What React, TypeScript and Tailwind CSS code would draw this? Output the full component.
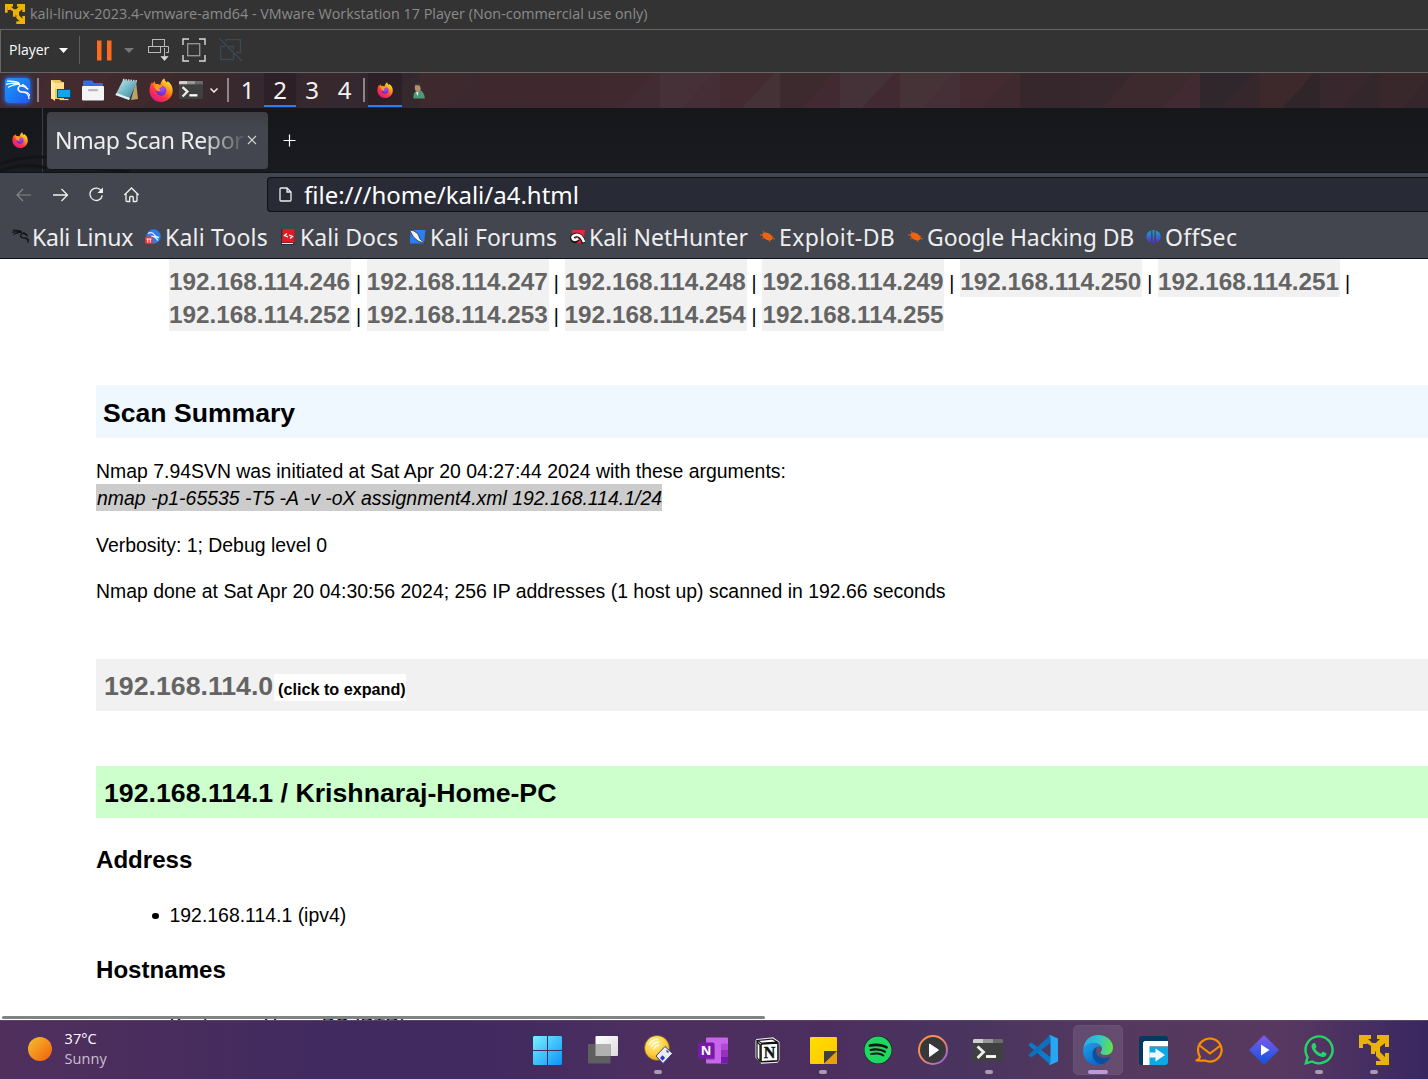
import React from "react";
import { SiKalilinux } from "react-icons/si";
import { FaSpotify, FaWhatsapp } from "react-icons/fa";

const NOTO = "font-['Noto_Sans',sans-serif]";
const SEGOE = "font-['Open_Sans',sans-serif]";

function VmwareIcon({ size, color }: { size: number; color: string }) {
  return (
    <svg width={size} height={size} viewBox="0 0 30 30" fill={color}>
      <path d="M0 0H12V4H8L13 8H17L22 4H18V0H30V12H26V8L21 12V17L26 22V18H30V30H17V26H22L17 21V17L15 15H12V11L8 8L4 5V13H0Z" />
      <path d="M12 15H16V19H12Z M4 5H8V9H4Z" />
      <path d="M7 4.6L11.5 8.8M23 4.6L18.5 8.8M19 19L24 24" stroke={color} strokeWidth="3.4" />
    </svg>
  );
}

function Firefox({ size }: { size: number }) {
  return (
    <svg width={size} height={size} viewBox="0 0 24 24">
      <defs>
        <linearGradient id="ffBody" x1="0.85" y1="0.05" x2="0.2" y2="0.95">
          <stop offset="0" stopColor="#fff44f" />
          <stop offset="0.35" stopColor="#ff980e" />
          <stop offset="0.65" stopColor="#ff3647" />
          <stop offset="1" stopColor="#e31587" />
        </linearGradient>
        <radialGradient id="ffGlobe" cx="0.6" cy="0.25" r="0.8">
          <stop offset="0" stopColor="#b24df5" />
          <stop offset="1" stopColor="#592acb" />
        </radialGradient>
      </defs>
      <path
        d="M15.2 0.2c.3 2 1.6 3.200 2.800 4.400.3-.3.4-1 .3-1.600C21.600 5 23.700 8.500 23.700 12.600 23.700 18.900 18.600 24 12.200 24 5.800 24 .5 18.900.5 12.400.5 9.200 1.500 6.200 3.200 4c0 .8.1 1.300.4 1.800C4.200 4.700 5 3.800 5.800 3.200c0 1.300.4 2.200 1.100 2.800 1.500-.3 3.100 0 4.300.9C12 4 13.300 1.600 15.200.2Z"
        fill="url(#ffBody)"
      />
      <circle cx="12.300" cy="12.800" r="5" fill="url(#ffGlobe)" />
      <path d="M4.500 6.500c2-.9 4.600-.6 6.300.8 1 .1 2.300.1 2.500.8-.2 1.200-2.600 1.400-3 2.300 0 1.200.6 1.900 1.700 1.900-1.400 1.300-3.600 1.200-4.800-.2C6.500 10.500 5 8.700 4.500 6.500Z" fill="#ff9a1a" />
    </svg>
  );
}

function WinFolder() {
  return (
    <svg width="22" height="24" viewBox="0 0 22 24">
      <path d="M1 2h9l2 2h2v17H1Z" fill="#f0c560" />
      <path d="M1 2l4 3v18l-4-3Z" fill="#ffe9a0" />
      <path d="M5 5h9v6H5Z" fill="#ffe08a" />
      <rect x="7.500" y="11.500" width="13" height="8" fill="#12a5ea" stroke="#0a4b78" />
      <path d="M9.500 21.500h9" stroke="#cfd8dc" strokeWidth="1.200" />
    </svg>
  );
}

function FileManager() {
  return (
    <svg width="22" height="21" viewBox="0 0 22 21">
      <path d="M1 2q0-1.500 1.500-1.500H10L12 3h8q1 0 1 1v5H1Z" fill="#2f6fe4" />
      <rect x="0" y="6" width="22" height="14.500" rx="1" fill="#f4f4f6" />
      <rect x="6" y="9" width="10" height="2.200" rx="1" fill="#b7b7b9" />
    </svg>
  );
}

function Notepad() {
  return (
    <svg width="24" height="24" viewBox="0 0 24 24">
      <defs>
        <linearGradient id="note" x1="0" y1="0" x2="1" y2="1">
          <stop offset="0" stopColor="#c9eef2" />
          <stop offset="0.5" stopColor="#6fb6c4" />
          <stop offset="1" stopColor="#357f92" />
        </linearGradient>
      </defs>
      <path d="M21 3L23 21L16 22Z" fill="#b9a468" />
      <path d="M8 2L22 3.500L14 22L0.500 17Z" fill="url(#note)" />
      <path d="M0.500 17L14 22L15 20L1.500 15Z" fill="#e6f1f2" />
      <path d="M8 1.500L22 3" stroke="#d9dcdc" strokeWidth="1.600" strokeDasharray="1.500 1" />
    </svg>
  );
}

function Terminal({ w, h }: { w: number; h: number }) {
  return (
    <svg width={w} height={h} viewBox="0 0 30 22" preserveAspectRatio="none">
      <rect width="30" height="22" rx="1.500" fill="#3f4040" />
      <path d="M1 0H10V4H0V1Z" fill="#cfcfcf" />
      <path d="M10 0H20V4H10Z" fill="#989898" />
      <path d="M20 0H29L30 1V4H20Z" fill="#6b6b6b" />
      <path d="M4.500 7.500L10.500 13L4.500 19" fill="none" stroke="#ededed" strokeWidth="2.800" />
      <path d="M13 17.500H23" stroke="#fff" strokeWidth="2.800" />
    </svg>
  );
}

function User() {
  return (
    <svg width="12" height="17" viewBox="0 0 12 17">
      <path d="M0.500 16.500C0 12 1.500 9.500 4 9L8 8.500Q11.500 11 11.800 16.500Z" fill="#4f9876" />
      <ellipse cx="4.800" cy="5.500" rx="3" ry="4.300" fill="#b78e6c" />
      <path d="M1.800 3C2.500 -0.500 8.500 -0.500 8.700 3.500L8.500 7.500L6.500 3.500Z" fill="#3a3535" />
      <path d="M3.200 10l2.300 .5-1.200 3.500Z" fill="#fff" />
    </svg>
  );
}

const WALL: [number, number, string, string][] = [
  [0, 60, "#402b32", "#432b30"],
  [60, 60, "#442b30", "#412a2e"],
  [120, 60, "#412a2e", "#3d292c"],
  [180, 60, "#3a292d", "#38292e"],
  [240, 60, "#36282f", "#34272c"],
  [300, 60, "#37282d", "#342930"],
  [360, 60, "#33272d", "#35292d"],
  [420, 60, "#3e292f", "#3c292f"],
  [480, 60, "#3f292e", "#3d292e"],
  [540, 60, "#3f292e", "#3f292e"],
  [600, 60, "#412a2f", "#422c33"],
  [660, 60, "#453137", "#462e36"],
  [720, 60, "#442b31", "#453237"],
  [780, 60, "#3c2a2e", "#432a32"],
  [840, 60, "#453238", "#422a32"],
  [900, 60, "#463338", "#463037"],
  [960, 60, "#432b31", "#3f2a2f"],
  [1020, 60, "#35272c", "#36272d"],
  [1080, 60, "#37282d", "#3d2a2e"],
  [1140, 60, "#3d2a2e", "#412a31"],
  [1200, 60, "#30272d", "#36272c"],
  [1260, 60, "#3d292c", "#30262a"],
  [1320, 60, "#38282e", "#34272c"],
  [1380, 60, "#38282c", "#35262b"],
];

function Wallpaper() {
  return (
    <svg className="absolute inset-0" width="1428" height="35" viewBox="0 0 1428 35">
      {WALL.map(([x, w, a, b]) => (
        <g key={x}>
          <rect x={x} y="0" width={w} height="35" fill={a} />
          <path d={`M${x + 54} 0H${x + w}V35H${x + 22}Z`} fill={b} />
        </g>
      ))}
    </svg>
  );
}

function Bookmark({ icon, label, w, iw, cls }: { icon: React.ReactNode; label: string; w: string; iw: string; cls: string }) {
  return (
    <div className={`flex items-center ${w}`}>
      <span className={`flex shrink-0 ${iw}`}>{icon}</span>
      <span className={`pt-[2px] whitespace-nowrap text-[23px] leading-none ${cls}`}>{label}</span>
    </div>
  );
}

function Bug() {
  return (
    <svg width="15" height="13" viewBox="0 0 15 13" fill="#ed6312">
      <ellipse cx="7.500" cy="6.500" rx="5.500" ry="3.300" transform="rotate(28 7.500 6.500)" />
      <path d="M0 5L4 5M3 1L5 4M13 6L11 7M15 9L11 8M10 12L9 9M2 9L5 7" stroke="#ed6312" strokeWidth="0.800" />
    </svg>
  );
}

const BOOKMARKS = [
  { label: "Kali Linux", w: "w-[133px]", iw: "w-[20px]", cls: "tracking-[-0.25px]", icon: <SiKalilinux size={17} color="#111214" stroke="#111214" strokeWidth={1} /> },
  {
    label: "Kali Tools", w: "w-[136px]", iw: "w-[20px]", cls: "tracking-[0.2px]",
    icon: (
      <svg width="16" height="16" viewBox="0 0 16 16">
        <circle cx="8.500" cy="7.500" r="7.200" fill="#2b7bf3" />
        <path d="M3 4.500q4-2 6 1t5 3M6 7.500q4-1 7 4" stroke="#e9f1fb" strokeWidth="1.300" fill="none" />
        <rect x="0" y="7.500" width="8" height="7.500" rx="2" fill="#e23838" />
        <path d="M1.500 10h5M2.800 10v3.500M5.300 10v3.500" stroke="#fff" />
      </svg>
    ),
  },
  {
    label: "Kali Docs", w: "w-[128px]", iw: "w-[19px]", cls: "tracking-[0.05px]",
    icon: (
      <svg width="15" height="16" viewBox="0 0 15 16">
        <path d="M0 0H13.500V16H0Z" fill="#2b2d40" />
        <path d="M1.500 0H13.500V13.500H1Z" fill="#e01b24" />
        <path d="M1 14.500H12" stroke="#eee" />
        <path d="M6 4.500L3.500 6.500L7 8M9 9.500L11.500 7.500L8 6" stroke="#fff" strokeWidth="1.300" fill="none" />
      </svg>
    ),
  },
  {
    label: "Kali Forums", w: "w-[160px]", iw: "w-[21px]", cls: "",
    icon: (
      <svg width="17" height="16" viewBox="0 0 17 16">
        <path d="M1.500 1H16.500L15 14.500H1Z" fill="#2780f6" />
        <path d="M0.500 1L5 2L9 5L11 10L16 14.500L9 12L4.500 8Z" fill="#f2f2f2" stroke="#222" strokeWidth="0.700" />
      </svg>
    ),
  },
  {
    label: "Kali NetHunter", w: "w-[191px]", iw: "w-[20px]", cls: "tracking-[-0.08px]",
    icon: (
      <svg width="16" height="16" viewBox="0 0 16 16">
        <path d="M3 1H16L14 14H4Z" fill="#e2283a" />
        <path d="M15 14Q12 5 7 6T4 11Q6 13 9 10" stroke="#111" strokeWidth="4.500" fill="none" />
        <path d="M15 13Q12 5 7 6T4 10Q6 12 9 9.500" stroke="#fff" strokeWidth="2.600" fill="none" />
      </svg>
    ),
  },
  { label: "Exploit-DB", w: "w-[148px]", iw: "w-[19px]", cls: "tracking-[0.38px]", icon: <Bug /> },
  { label: "Google Hacking DB", w: "w-[238px]", iw: "w-[19px]", cls: "tracking-[-0.1px]", icon: <Bug /> },
  {
    label: "OffSec", w: "w-[100px]", iw: "w-[19px]", cls: "tracking-[0.3px]",
    icon: (
      <svg width="15" height="16" viewBox="0 0 16 16">
        <defs>
          <linearGradient id="off" x1="0" y1="0" x2="0" y2="1">
            <stop offset="0" stopColor="#14a9cf" />
            <stop offset="1" stopColor="#5b1fd0" />
          </linearGradient>
        </defs>
        <path d="M5.500 1V14Q0 12.500 0.300 7.500Q0.500 2.500 5.500 1ZM10.500 1V14Q15.700 12.500 15.700 7.500Q15.500 2.500 10.500 1ZM7 0.500H9V15.500L8 16L7 15.500Z" fill="url(#off)" />
      </svg>
    ),
  },
];

const ROWS = [
  ["192.168.114.246", "192.168.114.247", "192.168.114.248", "192.168.114.249", "192.168.114.250", "192.168.114.251"],
  ["192.168.114.252", "192.168.114.253", "192.168.114.254", "192.168.114.255"],
];

function Start() {
  return (
    <svg width="29" height="29" viewBox="0 0 29 29">
      <defs>
        <linearGradient id="win" x1="0" y1="0" x2="1" y2="1">
          <stop offset="0" stopColor="#79f0ff" />
          <stop offset="1" stopColor="#0a93f8" />
        </linearGradient>
      </defs>
      <path d="M1 0H14V14H0V1ZM15 0H28L29 1V14H15ZM0 15H14V29H1L0 28ZM15 15H29V28L28 29H15Z" fill="url(#win)" />
    </svg>
  );
}

function TaskView() {
  return (
    <svg width="30" height="28" viewBox="0 0 30 28">
      <defs>
        <linearGradient id="tv" x1="0" y1="0" x2="1" y2="1">
          <stop offset="0" stopColor="#fff" />
          <stop offset="1" stopColor="#dcdcdc" />
        </linearGradient>
      </defs>
      <rect x="7.500" width="22.500" height="20" rx="1" fill="url(#tv)" />
      <rect y="8" width="22.500" height="19.500" rx="1" fill="#5f5f60" />
      <path d="M7.500 8H22.500V20H7.500Z" fill="#b1b1b2" />
    </svg>
  );
}

function Bulb() {
  return (
    <svg width="30" height="30" viewBox="0 0 30 30">
      <defs>
        <radialGradient id="bulb" cx="0.4" cy="0.3" r="0.75">
          <stop offset="0" stopColor="#ffef9a" />
          <stop offset="0.6" stopColor="#fbcf3c" />
          <stop offset="1" stopColor="#e19a12" />
        </radialGradient>
      </defs>
      <circle cx="14" cy="13" r="12.500" fill="url(#bulb)" stroke="#6b5320" strokeWidth="0.600" />
      <path d="M13 21L22 11.500L29.500 18.500L20 28.500Z" fill="#e9eaf4" stroke="#2c3170" strokeWidth="0.900" />
      <path d="M17 23l2.500-2.800 2.500 2.600-2.500 3Z" fill="#2b36c4" />
      <path d="M23.500 15.500l2 2" stroke="#2b36c4" strokeWidth="1.500" />
      <path d="M6 10Q9 4 15 4M8 12Q11 7 16 7M10.500 14Q12.500 10.500 16 10" stroke="#fffbe0" strokeWidth="1.300" fill="none" />
    </svg>
  );
}

function OneNote() {
  return (
    <svg width="30" height="27" viewBox="0 0 30 27">
      <rect x="8" y="0.500" width="22" height="26" rx="1" fill="#ca64ea" />
      <path d="M23 6.500H30V13H23Z" fill="#ae4bd5" />
      <path d="M23 13H30V19.500H23Z" fill="#9332bf" />
      <path d="M23 19.500H30V26.500H23Z" fill="#7719aa" />
      <path d="M8 6.500H17V22.500H8Z" fill="#8c3fb0" />
      <rect y="5.500" width="16" height="16" rx="1" fill="#7719aa" />
      <text x="8" y="18" textAnchor="middle" fontSize="13" fontWeight="bold" fill="#fff" fontFamily="Open Sans">N</text>
    </svg>
  );
}

function Notion() {
  return (
    <svg width="25" height="27" viewBox="0 0 25 27">
      <path d="M1.500 2.500L18 0.800L24 5V23L22.500 25.300L6 26.300L1 20.500V3.500Z" fill="#fff" stroke="#e8e8e8" />
      <path d="M2.500 3.500L17.500 2L22.500 5.200L6.500 6.200ZM5 8V24.700L2 20.500V4.500Z" fill="#fff" stroke="#111" strokeWidth="1.200" />
      <path d="M6 7.800Q6 7 7 7L22 6Q23 6 23 7V22.700Q23 23.800 22 23.900L7 24.800Q6 24.800 6 24Z" fill="#fff" stroke="#111" strokeWidth="1.600" />
      <text x="14.500" y="21" textAnchor="middle" fontSize="16" fontWeight="bold" fill="#111" stroke="#111" strokeWidth="0.400" fontFamily="Liberation Serif">N</text>
    </svg>
  );
}

function Sticky() {
  return (
    <svg width="27" height="27" viewBox="0 0 27 27">
      <defs>
        <linearGradient id="stk" x1="0" y1="0" x2="1" y2="1">
          <stop offset="0" stopColor="#ffe000" />
          <stop offset="1" stopColor="#ffc400" />
        </linearGradient>
      </defs>
      <rect width="27" height="27" rx="1" fill="url(#stk)" />
      <path d="M14 27V14H27V27Z" fill="#e9a00a" />
      <path d="M14 14H27L14 26.500Z" fill="#3f3f42" />
    </svg>
  );
}

function Media() {
  return (
    <svg width="30" height="30" viewBox="0 0 30 30">
      <defs>
        <linearGradient id="med" x1="0" y1="0" x2="1" y2="1">
          <stop offset="0" stopColor="#ff9440" />
          <stop offset="0.5" stopColor="#f0866a" />
          <stop offset="1" stopColor="#8a5ae8" />
        </linearGradient>
      </defs>
      <circle cx="15" cy="15" r="14" fill="#37383a" stroke="url(#med)" strokeWidth="2" />
      <path d="M11.500 9L20.500 15L11.500 21.500Z" fill="#fff" stroke="#fff" strokeLinejoin="round" />
    </svg>
  );
}

function VsCode() {
  return (
    <svg width="30" height="30" viewBox="0 0 30 30">
      <path d="M0.300 10L2.500 8Q3.200 7.500 4 8L23 22.500V29.500L21.500 29Z" fill="#0a7bc9" />
      <path d="M0.300 20L2.500 22Q3.200 22.500 4 22L23 7.500V0.500L21.500 1Z" fill="#0b71bd" />
      <path d="M22 0L30 3.500V26.500L22 30L21 29Q22.500 28.500 22.500 27V3Q22.500 1.500 21 1Z" fill="#27a7f2" />
    </svg>
  );
}

function Edge() {
  return (
    <svg width="30" height="30" viewBox="0 0 30 30">
      <defs>
        <linearGradient id="e1" x1="0" y1="0.3" x2="1" y2="0.4">
          <stop offset="0" stopColor="#2aa9ea" />
          <stop offset="0.5" stopColor="#2fc5cf" />
          <stop offset="1" stopColor="#67e04a" />
        </linearGradient>
        <linearGradient id="e2" x1="0" y1="0" x2="0.6" y2="1">
          <stop offset="0" stopColor="#1fa2e8" />
          <stop offset="1" stopColor="#0b68cb" />
        </linearGradient>
      </defs>
      <path d="M0.300 14C1 5.500 7 0 15 0c9 0 15 6 15 12.500 0 5-3.500 7.500-7.500 7.500-3.500 0-5-1.200-5-2.200 0-.8 1.500-1.600 1.500-4C19 10.500 15.500 8 11 8 6 8 2 10.500 0.300 14Z" fill="url(#e1)" />
      <path d="M13.300 12C11 14 8.500 16.500 8.500 19.500c0 5.500 4.500 10 10 9.900 4-1 7-3.700 8.500-6.700.2-.8-.5-1-1-.7-6 3-14-.5-13-7 0-1.200.1-2.200.3-3Z" fill="#0c4f9c" />
      <path d="M0.200 14.500C1.500 10.500 5.500 8 10.500 8c4 0 7 1.800 8.200 4.300-4-2.300-9.200.7-9.200 6.700 0 5.500 4 10 9.500 10.300C9 32.500 -1 25 0.200 14.500Z" fill="url(#e2)" />
    </svg>
  );
}

function FArrow() {
  return (
    <svg width="29" height="29" viewBox="0 0 29 29">
      <rect width="29" height="29" rx="3" fill="#053a5e" />
      <path d="M10 11H29V26Q29 29 26 29H10Z" fill="#0ea9e4" />
      <path d="M5.500 5H29V10.500H10.500V29H4V6.500Z" fill="#fff" />
      <path d="M10.500 16.500H16.500V12.500L26 19L16.500 25.500V21.500H10.500Z" fill="#f1f8ff" />
    </svg>
  );
}

function EmClient() {
  return (
    <svg width="28" height="26" viewBox="0 0 28 26" fill="none" stroke="#fb8c00" strokeWidth="2.200" strokeLinejoin="round">
      <path d="M5 20Q3 17 3 13A11.800 11.500 0 1 1 10 23.500Q6 23.800 1.500 23.500Q4.500 22 5 20Z" />
      <path d="M4.500 8.500L15 16.500L25.500 8.500" />
    </svg>
  );
}

function Diamond() {
  return (
    <svg width="30" height="30" viewBox="0 0 30 30">
      <defs>
        <linearGradient id="dia" x1="0" y1="0" x2="0" y2="1">
          <stop offset="0" stopColor="#8458ee" />
          <stop offset="1" stopColor="#0b55dc" />
        </linearGradient>
      </defs>
      <path d="M15 0L30 15L15 30L0 15Z" fill="url(#dia)" />
      <path d="M12 9.500L20.500 15L12 20.500Z" fill="#fff" />
    </svg>
  );
}

const TASKS: { icon: React.ReactNode; dot?: boolean; active?: boolean }[] = [
  { icon: <Start /> },
  { icon: <TaskView /> },
  { icon: <Bulb />, dot: true },
  { icon: <OneNote /> },
  { icon: <Notion /> },
  { icon: <Sticky />, dot: true },
  { icon: <span className="flex rounded-full bg-[#191414]"><FaSpotify size={28} color="#1ed760" /></span> },
  { icon: <Media /> },
  { icon: <Terminal w={30} h={22} />, dot: true },
  { icon: <VsCode /> },
  { icon: <Edge />, active: true },
  { icon: <FArrow /> },
  { icon: <EmClient /> },
  { icon: <Diamond /> },
  { icon: <FaWhatsapp size={34} color="#25d366" />, dot: true },
  { icon: <VmwareIcon size={30} color="#eab308" />, dot: true },
];

function TitleBar() {
  return (
    <div className={`flex h-[29px] items-center bg-[#333333] ${SEGOE}`}>
      <span className="ml-[5px] w-[25px] pb-[2px]"><VmwareIcon size={20} color="#f0b400" /></span>
      <span className="whitespace-nowrap text-[14.35px] leading-none text-[#8b8b8b]">
        kali-linux-2023.4-vmware-amd64 - VMware Workstation 17 Player (Non-commercial use only)
      </span>
    </div>
  );
}

function MenuBar() {
  return (
    <div className="flex h-[44px] items-center border-y border-l border-[#666666] bg-[#333333] pb-[2px]">
      <span className={`ml-[8px] w-[50px] text-[14px] leading-none text-white ${SEGOE}`}>Player</span>
      <svg width="9" height="5" viewBox="0 0 9 5"><path d="M0 0H9L4.500 5Z" fill="#fff" /></svg>
      <span className="ml-[11px] h-[28px] w-px bg-[#5f5f5f]" />
      <svg className="ml-[16px]" width="16" height="21" viewBox="0 0 16 21">
        <path d="M1 0.500H5.500V20.500H1ZM11 0.500H15.500V20.500H11Z" fill="#fd6b1c" />
      </svg>
      <svg className="ml-[12px]" width="10" height="5" viewBox="0 0 10 5"><path d="M0 0H10L5 5Z" fill="#777" /></svg>
      <svg className="ml-[14px]" width="22" height="22" viewBox="0 0 22 22" fill="none" stroke="#b9b9b9">
        <rect x="4.500" y="0.500" width="12" height="7" />
        <rect x="0.500" y="7.500" width="12" height="6" />
        <path d="M12.500 7.500H20.500V13.500H18M16.500 9V19" />
        <path d="M13 17.500L16.500 21.500L20 17.500Z" fill="#ddd" />
      </svg>
      <svg className="ml-[12px]" width="24" height="24" viewBox="0 0 24 24" fill="none">
        <path d="M1 7V1H7M17 1H23V7M23 17V23H17M7 23H1V17" stroke="#dcdcdc" strokeWidth="1.400" />
        <rect x="5.700" y="5.700" width="12" height="12" stroke="#9a9a9a" strokeWidth="1.300" />
      </svg>
      <svg className="ml-[13px]" width="24" height="24" viewBox="0 0 24 24" fill="none" stroke="#3a4954" strokeWidth="1.300">
        <path d="M7 4V1.700H21.500V14.500H17M1.700 8V21.500H14.500V15M0.500 0.500L23 23M1.700 8.500H6M10 8.500H14.500V11" />
      </svg>
    </div>
  );
}

function KaliPanel() {
  return (
    <div className={`relative h-[35px] border-b border-[#25252b] bg-[#3b292e] ${NOTO}`}>
      <Wallpaper />
      <div className="relative flex h-[34px] items-center text-[24px] leading-none text-[#f2f2f2]">
        <span className="ml-[5px] flex size-[25px] items-center justify-center rounded-[4px] bg-gradient-to-br from-[#1d9cf8] to-[#2357f0] shadow-[0_0_4px_1px_#2466e8]">
          <SiKalilinux size={24} color="#fff" stroke="#fff" strokeWidth={0.9} />
        </span>
        <span className="ml-[7px] h-[24px] w-[2px] bg-[#8f8488]" />
        <span className="ml-[11px] flex w-[32px]"><WinFolder /></span>
        <span className="flex w-[33px]"><FileManager /></span>
        <span className="flex w-[34px]"><Notepad /></span>
        <span className="flex w-[30px]"><Firefox size={24} /></span>
        <Terminal w={24} h={18} />
        <svg className="ml-[7px]" width="8" height="5" viewBox="0 0 8 5"><path d="M0.500 0.500L4 4L7.500 0.500" fill="none" stroke="#eee" strokeWidth="1.500" /></svg>
        <span className="ml-[9px] h-[24px] w-[2px] bg-[#8f8488]" />
        <span className="ml-[2px] w-[33px] text-center">1</span>
        <span className="flex h-[34px] w-[32px] items-center justify-center border-b-2 border-[#2b7cf6] bg-[#2a1e24]/70 pt-[2px]">2</span>
        <span className="w-[32px] text-center">3</span>
        <span className="w-[33px] text-center">4</span>
        <span className="ml-[2px] h-[24px] w-[2px] bg-[#8f8488]" />
        <span className="ml-[3px] flex h-[34px] w-[34px] items-center justify-center border-b-2 border-[#2b7cf6] bg-[#2a1e24]/70 pt-[2px]">
          <Firefox size={16} />
        </span>
        <span className="ml-[11px]"><User /></span>
      </div>
    </div>
  );
}

function TabStrip() {
  return (
    <div className="relative flex h-[65px] overflow-hidden border-b border-[#111216] bg-gradient-to-b from-[#15171b] to-[#1a1b20]">
      <svg className="absolute top-[44px] left-0" width="140" height="20" viewBox="0 0 140 20" fill="none" stroke="#131418" strokeWidth="3">
        <path d="M0 12Q20 4 46 5M0 19Q24 10 46 16M50 17Q90 14 130 20" />
      </svg>
      <span className="relative ml-[12px] flex w-[30px] items-center"><Firefox size={16} /></span>
      <span className="w-px bg-[#3c3d42]" />
      <div className="relative ml-[4px] mt-[4px] flex h-[57px] w-[221px] items-center rounded-[4px] bg-gradient-to-b from-[#3f4044] to-[#43464e] to-30%">
        <span className={`ml-[8px] w-[189px] overflow-hidden whitespace-nowrap pb-[2px] text-[23px] leading-[34px] tracking-[-0.35px] text-[#eeeeee] [mask-image:linear-gradient(to_right,#000_78%,transparent_102%)] ${NOTO}`}>
          Nmap Scan Report
        </span>
        <svg className="mb-px ml-[3px]" width="10" height="10" viewBox="0 0 10 10"><path d="M1 1L9 9M9 1L1 9" stroke="#d5d5d7" strokeWidth="1.100" /></svg>
      </div>
      <svg className="relative mt-[26px] ml-[15px]" width="14" height="14" viewBox="0 0 14 14"><path d="M6.500 0.500V12.500M0.500 6.500H12.500" stroke="#fff" strokeWidth="1.200" /></svg>
    </div>
  );
}

function NavBar() {
  return (
    <div className="flex h-[43px] items-center bg-[#43464e]">
      <svg className="ml-[16px]" width="16" height="14" viewBox="0 0 16 14" fill="none" stroke="#85868a" strokeWidth="1.200"><path d="M15 7H1.500M7 1L1 7L7 13" /></svg>
      <svg className="ml-[21px]" width="16" height="14" viewBox="0 0 16 14" fill="none" stroke="#f1f1f1" strokeWidth="1.300"><path d="M0 7H14M8.500 1L14.500 7L8.500 13" /></svg>
      <svg className="ml-[20px]" width="15" height="15" viewBox="0 0 15 15" fill="none" stroke="#f1f1f1" strokeWidth="1.300">
        <path d="M12.500 4A6.200 6.200 0 1 0 13.300 8.500" />
        <path d="M14 0.500V6H8.500Z" fill="#f1f1f1" stroke="none" />
      </svg>
      <svg className="ml-[19px]" width="17" height="16" viewBox="0 0 17 16" fill="none" stroke="#f1f1f1" strokeWidth="1.300">
        <path d="M1.300 8L8.500 1L15.700 8M3 7V13.500Q3 14.500 4 14.500H6.700V10.500Q6.700 9.500 7.700 9.500H9.300Q10.300 9.500 10.300 10.500V14.500H13Q14 14.500 14 13.500V7" />
      </svg>
      <div className="ml-[127px] flex h-[35px] flex-1 items-center rounded-l-[4px] border border-r-0 border-[#0f1014] bg-[#282a36]">
        <svg className="mb-px ml-[11px]" width="13" height="15" viewBox="0 0 13 15" fill="none" stroke="#eeeeee" strokeWidth="1.300">
          <path d="M2 1H8L12 5V13Q12 14 11 14H2Q1 14 1 13V2Q1 1 2 1ZM8 1V5H12" />
        </svg>
        <span className={`ml-[12px] text-[24px] leading-none text-white ${NOTO}`}>file:///home/kali/a4.html</span>
      </div>
    </div>
  );
}

function Report() {
  return (
    <div className="h-[761px] overflow-hidden bg-white pl-[96px] font-['Liberation_Sans',sans-serif] text-[19.43px] text-black">
      <div className="pl-[73px]">
        {ROWS.map((row, r) => (
          <div key={r} className={r === 0 ? "flex h-[38px]" : "flex h-[34px]"}>
            {row.map((ip, i) => (
              <span key={ip} className="flex w-[197.800px] items-baseline">
                <span className={`w-[182px] shrink-0 bg-[#f1f1f1] text-[24.300px] font-bold text-[#646464] ${r === 0 ? "h-[38px] leading-[46px]" : "h-[34px] leading-[36px]"}`}>{ip}</span>
                {(r === 0 || i < 3) && <span className="w-[15px] text-center">|</span>}
              </span>
            ))}
          </div>
        ))}
      </div>
      <h2 className="mt-[54px] h-[53px] bg-[#f0f8ff] pl-[7px] text-[26.600px] leading-[57px] font-bold">Scan Summary</h2>
      <p className="mt-[20px] h-[26px] leading-[27px]">Nmap 7.94SVN was initiated at Sat Apr 20 04:27:44 2024 with these arguments:</p>
      <p className="flex"><i className="h-[27px] w-[566px] bg-[#cccccc] pl-px text-[19.450px] leading-[28px] whitespace-nowrap">nmap -p1-65535 -T5 -A -v -oX assignment4.xml 192.168.114.1/24</i></p>
      <p className="mt-[21px] leading-[27px]">Verbosity: 1; Debug level 0</p>
      <p className="mt-[19px] leading-[27px]">Nmap done at Sat Apr 20 04:30:56 2024; 256 IP addresses (1 host up) scanned in 192.66 seconds</p>
      <h2 className="mt-[54px] flex h-[52px] bg-[#f1f1f1] pl-[8px] text-[26.700px] leading-[55px] font-bold text-[#646464]">
        <span className="w-[170px]">192.168.114.0</span>
        <span className="mt-[15px] h-[27px] w-[132px] bg-white pl-[4px] text-[16.200px] leading-[31px] whitespace-nowrap text-black">(click to expand)</span>
      </h2>
      <h2 className="mt-[55px] h-[52px] bg-[#ccffcc] pl-[8px] text-[26.700px] leading-[55px] font-bold">192.168.114.1 / Krishnaraj-Home-PC</h2>
      <h3 className="mt-[28px] text-[24.100px] leading-[27px] font-bold">Address</h3>
      <ul className="mt-[29px] pl-[56px] leading-[27px]">
        <li className="flex items-center"><span className="mt-px mr-[11px] size-[6.500px] rounded-full bg-black" />192.168.114.1 (ipv4)</li>
      </ul>
      <h3 className="mt-[27px] text-[24.100px] leading-[27px] font-bold">Hostnames</h3>
      <ul className="mt-[29px] pl-[56px] leading-[27px]">
        <li className="flex items-center"><span className="mr-[11px] size-[6.500px] rounded-full bg-black" />Krishnaraj-Home-PC (PTR)</li>
      </ul>
    </div>
  );
}

function Taskbar() {
  return (
    <div className={`relative flex h-[59px] border-t border-[#5a4468] bg-[linear-gradient(90deg,#502f5c_0%,#402a60_25%,#432b60_37%,#4c2f60_45%,#4c2e5e_58%,#4a355f_68%,#56395f_80%,#583860_90%,#452e62_96%,#38275f_100%)] ${SEGOE}`}>
      <span className="mt-[16px] ml-[28px] size-[24px] rounded-full bg-gradient-to-br from-[#efc12f] to-[#f26a10] to-85%" />
      <div className="ml-[12.500px] w-[455.500px] pt-[8px] text-[14.500px] leading-[20px] tracking-[0.100px]">
        <div className="text-white">37°C</div>
        <div className="text-[#cbc0d0]">Sunny</div>
      </div>
      {TASKS.map((t, i) => (
        <div key={i} className="relative flex h-[58px] w-[55.100px] shrink-0 items-center justify-center">
          {t.active && <span className="absolute top-[4px] left-[2px] h-[50px] w-[50px] rounded-[5px] border border-[#67527a] bg-white/10" />}
          <span className="relative flex">{t.icon}</span>
          {t.dot && <span className="absolute top-[49px] left-[24px] h-[4px] w-[8px] rounded-full bg-[#a99bb2]" />}
          {t.active && <span className="absolute top-[49px] left-[17px] h-[4px] w-[20px] rounded-full bg-[#bd9bd9]" />}
        </div>
      ))}
    </div>
  );
}

export default function App() {
  return (
    <div className="h-[1079px] w-[1428px] overflow-hidden bg-white">
      <TitleBar />
      <MenuBar />
      <KaliPanel />
      <TabStrip />
      <NavBar />
      <div className={`flex h-[43px] items-center border-b border-[#0f1014] bg-[#43464e] pb-px pl-[12px] text-[#eeeeee] ${NOTO}`}>
        {BOOKMARKS.map((b) => <Bookmark key={b.label} {...b} />)}
      </div>
      <div className="relative">
        <Report />
        <span className="absolute bottom-[1px] left-[2px] h-[3px] w-[763px] rounded-full bg-[#7f8384]" />
      </div>
      <Taskbar />
    </div>
  );
}
